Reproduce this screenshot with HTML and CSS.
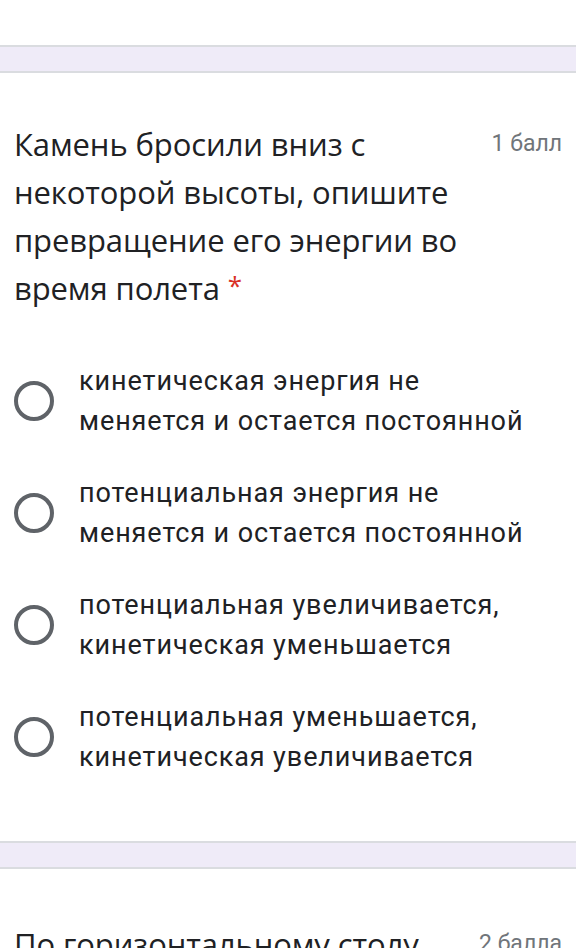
FILE: index.html
```html
<!DOCTYPE html>
<html lang="ru">
<head>
<meta charset="utf-8">
<link rel="stylesheet" href="styles.css">
</head>
<body>
<div class="top-space"></div>
<div class="band"></div>
<section class="card">
  <div class="q-head">
    <div class="q-title">Камень бросили вниз с некоторой высоты, опишите превращение его энергии во время полета <span class="req">*</span></div>
    <div class="q-points">1 балл</div>
  </div>
  <ul class="options">
    <li class="option"><span class="radio"></span><span class="opt-text">кинетическая энергия не меняется и остается постоянной</span></li>
    <li class="option"><span class="radio"></span><span class="opt-text">потенциальная энергия не меняется и остается постоянной</span></li>
    <li class="option"><span class="radio"></span><span class="opt-text">потенциальная увеличивается, кинетическая уменьшается</span></li>
    <li class="option"><span class="radio"></span><span class="opt-text">потенциальная уменьшается, кинетическая увеличивается</span></li>
  </ul>
</section>
<div class="band"></div>
<section class="card card-next">
  <div class="q-head">
    <div class="q-title">По горизонтальному столу</div>
    <div class="q-points">2 балла</div>
  </div>
</section>
</body>
</html>
```
FILE: styles.css
```css
html, body {
  margin: 0;
  padding: 0;
  background: #fff;
  overflow: hidden;
}
body {
  width: 576px;
  height: 948px;
  font-family: Roboto, "Liberation Sans", sans-serif;
  color: #202124;
}
.top-space {
  height: 45px;
}
.band {
  height: 24px;
  background: #efebf8;
  border-top: 2px solid #dadce0;
  border-bottom: 2px solid #dadce0;
}
.card {
  padding: 47px 14px 64px 14px;
}
.card-next {
  padding-top: 51px;
}
.q-head {
  display: flex;
  justify-content: space-between;
  align-items: flex-start;
}
.q-title {
  width: 460px;
  font-family: "Open Sans", sans-serif;
  font-size: 31px;
  line-height: 48px;
  letter-spacing: -0.1px;
  color: #202124;
}
.card-next .q-title {
  white-space: nowrap;
}
.req {
  color: #d93025;
  font-size: 26px;
  line-height: 0;
  vertical-align: 5px;
}
.q-points {
  font-size: 23px;
  line-height: 48px;
  color: #70757a;
  white-space: nowrap;
}
.options {
  list-style: none;
  margin: 49px 0 0 0;
  padding: 0;
  display: flex;
  flex-direction: column;
  gap: 32px;
}
.option {
  display: flex;
  align-items: center;
  gap: 25px;
}
.radio {
  flex: none;
  width: 40px;
  height: 40px;
  border: 4px solid #5f6368;
  border-radius: 50%;
  box-sizing: border-box;
}
.opt-text {
  font-size: 27px;
  line-height: 40px;
  letter-spacing: 0.9px;
  width: 458px;
}
```
